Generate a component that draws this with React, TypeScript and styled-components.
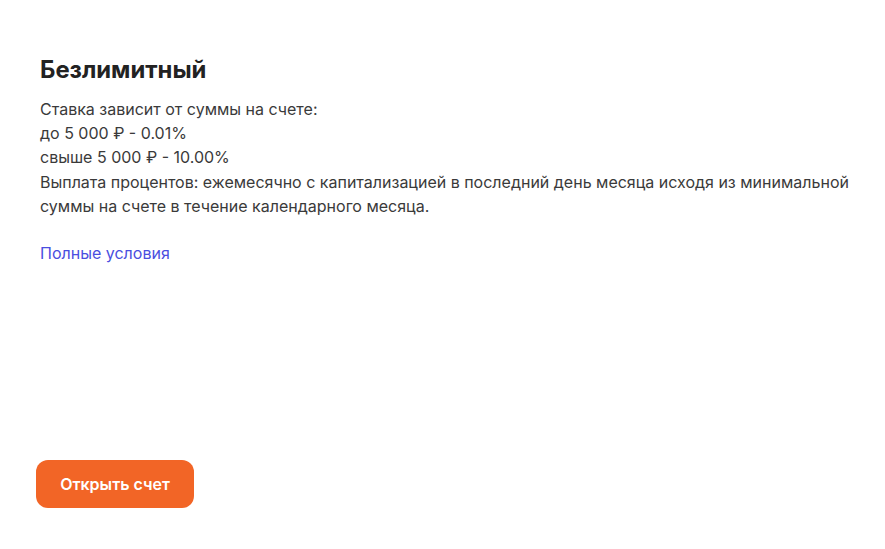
import React from "react";
import styled, { createGlobalStyle } from "styled-components";

const Global = createGlobalStyle`
  html, body { margin: 0; padding: 0; background: #ffffff; }
  body { font-family: Inter, "Noto Sans", sans-serif; color: #333333; }
`;

const Card = styled.div`
  width: 885px;
  height: 549px;
  box-sizing: border-box;
  padding: 55px 36px 41px 36px;
  display: flex;
  flex-direction: column;
  justify-content: space-between;
`;

const Content = styled.div`
  padding-left: 4px;
  display: flex;
  flex-direction: column;
`;

const Title = styled.h2`
  margin: 0 0 12px 0;
  font-size: 23.8px;
  line-height: 30px;
  font-weight: 700;
  color: #222222;
`;

const Body = styled.p`
  margin: 0;
  font-size: 16px;
  line-height: 24.2px;
  color: #3a3a3a;
`;

const Link = styled.a`
  margin-top: 23px;
  font-size: 16px;
  line-height: 24px;
  color: #4a4ee0;
  text-decoration: none;
`;

const Button = styled.button`
  align-self: flex-start;
  width: 158px;
  height: 48px;
  border: none;
  border-radius: 12px;
  background: #f26526;
  color: #ffffff;
  font-family: Inter, "Noto Sans", sans-serif;
  font-size: 16px;
  font-weight: 600;
  cursor: pointer;
`;

export default function App() {
  return (
    <>
      <Global />
      <Card>
        <Content>
          <Title>Безлимитный</Title>
          <Body>
            Ставка зависит от суммы на счете:
            <br />
            до 5 000 ₽ - 0.01%
            <br />
            свыше 5 000 ₽ - 10.00%
            <br />
            Выплата процентов: ежемесячно с капитализацией в последний день месяца исходя из минимальной суммы на счете в течение календарного месяца.
          </Body>
          <Link href="#">Полные условия</Link>
        </Content>
        <Button>Открыть счет</Button>
      </Card>
    </>
  );
}
